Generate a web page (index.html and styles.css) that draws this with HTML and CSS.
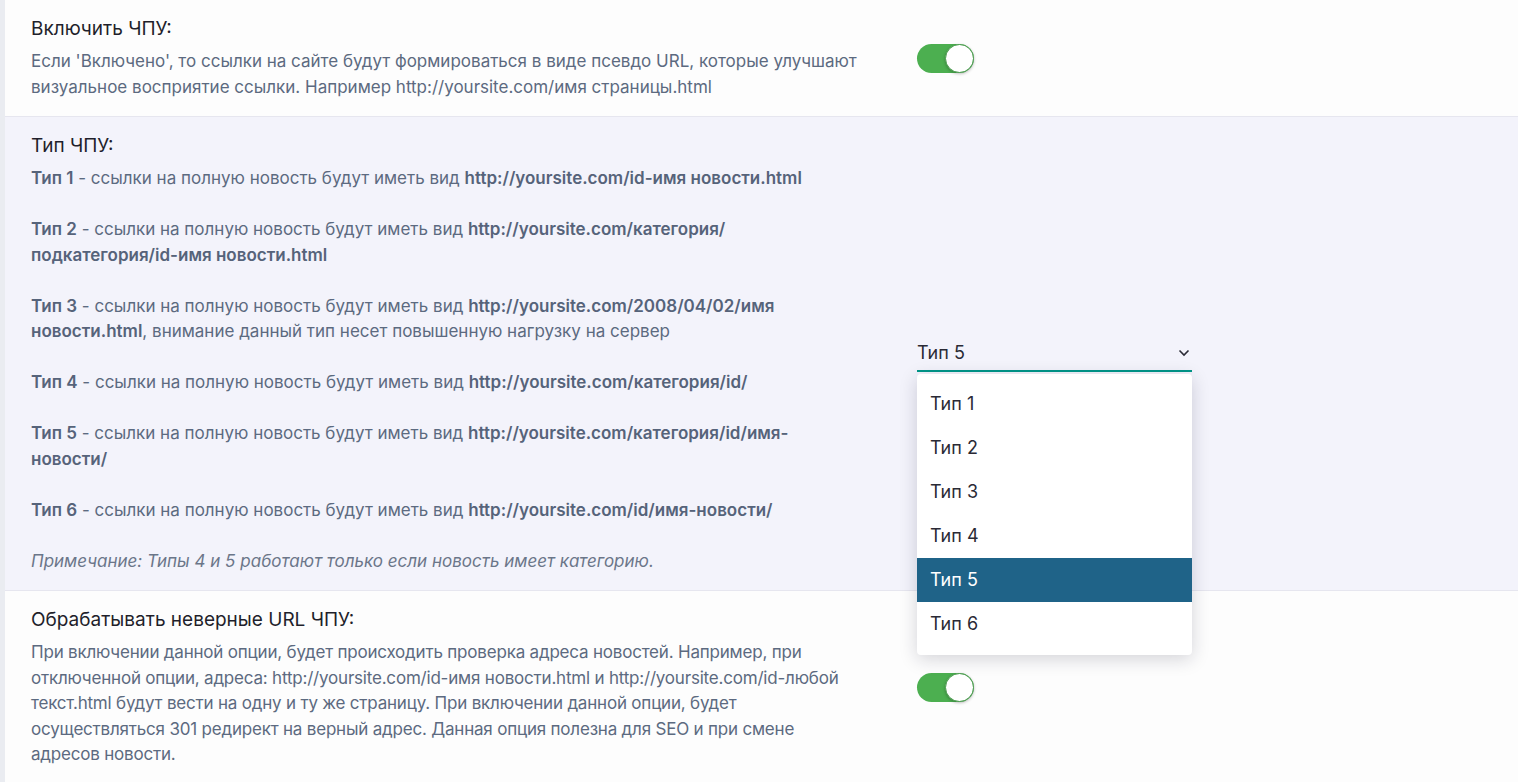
FILE: index.html
```html
<!DOCTYPE html>
<html lang="ru">
<head>
  <meta charset="UTF-8">
  <title>Настройки ЧПУ</title>
  <link rel="stylesheet" href="styles.css">
</head>
<body>

  <div class="settings">

    <div class="row">
      <div class="info">
        <div class="title">Включить ЧПУ:</div>
        <div class="desc">Если 'Включено', то ссылки на сайте будут формироваться в виде псевдо URL, которые улучшают визуальное восприятие ссылки. Например http://yoursite.com/имя страницы.html</div>
      </div>
      <div class="control">
        <label class="switch"><span class="knob"></span></label>
      </div>
    </div>

    <div class="row alt">
      <div class="info">
        <div class="title">Тип ЧПУ:</div>
        <div class="desc">
          <b>Тип 1</b> - ссылки на полную новость будут иметь вид <b>http://yoursite.com/id-имя новости.html</b><br><br>
          <b>Тип 2</b> - ссылки на полную новость будут иметь вид <b>http://yoursite.com/категория/подкатегория/id-имя новости.html</b><br><br>
          <b>Тип 3</b> - ссылки на полную новость будут иметь вид <b>http://yoursite.com/2008/04/02/имя новости.html</b>, внимание данный тип несет повышенную нагрузку на сервер<br><br>
          <b>Тип 4</b> - ссылки на полную новость будут иметь вид <b>http://yoursite.com/категория/id/</b><br><br>
          <b>Тип 5</b> - ссылки на полную новость будут иметь вид <b>http://yoursite.com/категория/id/имя-новости/</b><br><br>
          <b>Тип 6</b> - ссылки на полную новость будут иметь вид <b>http://yoursite.com/id/имя-новости/</b><br><br>
          <i>Примечание: Типы 4 и 5 работают только если новость имеет категорию.</i>
        </div>
      </div>
      <div class="control">
        <div class="select">
          <div class="select-value">
            <span>Тип 5</span>
            <svg width="12" height="8" viewBox="0 0 12 8"><path d="M1.5 1.5 L6 6 L10.5 1.5" fill="none" stroke="#2a2a35" stroke-width="1.6"/></svg>
          </div>
          <ul class="select-menu">
            <li>Тип 1</li>
            <li>Тип 2</li>
            <li>Тип 3</li>
            <li>Тип 4</li>
            <li class="active">Тип 5</li>
            <li>Тип 6</li>
          </ul>
        </div>
      </div>
    </div>

    <div class="row">
      <div class="info">
        <div class="title">Обрабатывать неверные URL ЧПУ:</div>
        <div class="desc narrow">При включении данной опции, будет происходить проверка адреса новостей. Например, при отключенной опции, адреса: http://yoursite.com/id-имя новости.html и http://yoursite.com/id-любой текст.html будут вести на одну и ту же страницу. При включении данной опции, будет осуществляться 301 редирект на верный адрес. Данная опция полезна для SEO и при смене адресов новости.</div>
      </div>
      <div class="control">
        <label class="switch"><span class="knob"></span></label>
      </div>
    </div>

  </div>

</body>
</html>
```

FILE: styles.css
```css
body {
  margin: 0;
  font-family: 'Inter', 'Noto Sans', sans-serif;
  background-color: #fdfdfd;
  overflow: hidden;
}

.settings {
  border-left: 5px solid #eaecf1;
  min-height: 100vh;
}

.row {
  display: grid;
  grid-template-columns: 912px 1fr;
  align-items: center;
  border-bottom: 1px solid #e6e6ef;
  background-color: #fdfdfd;
}

.row.alt {
  background-color: #f3f3fb;
}

.info {
  padding: 17px 57px 16px 26px;
}

.title {
  font-size: 19px;
  line-height: 24px;
  color: #1f1f2b;
  margin-bottom: 8px;
}

.desc {
  font-size: 17px;
  line-height: 25.5px;
  color: #5c6a80;
}

.desc.narrow {
  letter-spacing: -0.2px;
}

.desc b {
  font-weight: 600;
  color: #56637a;
}

.desc i {
  color: #6b7689;
}

.switch {
  display: block;
  position: relative;
  width: 57px;
  height: 29px;
  border-radius: 15px;
  background-color: #4caf50;
}

.switch .knob {
  position: absolute;
  top: 0;
  right: 0;
  width: 27px;
  height: 27px;
  border-radius: 50%;
  background: #fff;
  border: 1px solid #479b4b;
  box-shadow: 0 1px 3px rgba(0, 0, 0, 0.25);
}

.select {
  position: relative;
  width: 275px;
  z-index: 10;
}

.select-value {
  display: flex;
  align-items: center;
  justify-content: space-between;
  height: 35px;
  padding-right: 2px;
  border-bottom: 2px solid #009688;
  font-size: 18px;
  color: #2a2a35;
}

.select-menu {
  position: absolute;
  top: 39px;
  left: 0;
  right: 0;
  margin: 0;
  padding: 8px 0 9px;
  list-style: none;
  background: #fff;
  border-radius: 4px;
  box-shadow: 0 4px 18px rgba(20, 20, 50, 0.18);
}

.select-menu li {
  height: 44px;
  line-height: 44px;
  padding-left: 13px;
  font-size: 18px;
  color: #2a2a35;
}

.select-menu li.active {
  background-color: #1f6388;
  color: #fff;
}
```
